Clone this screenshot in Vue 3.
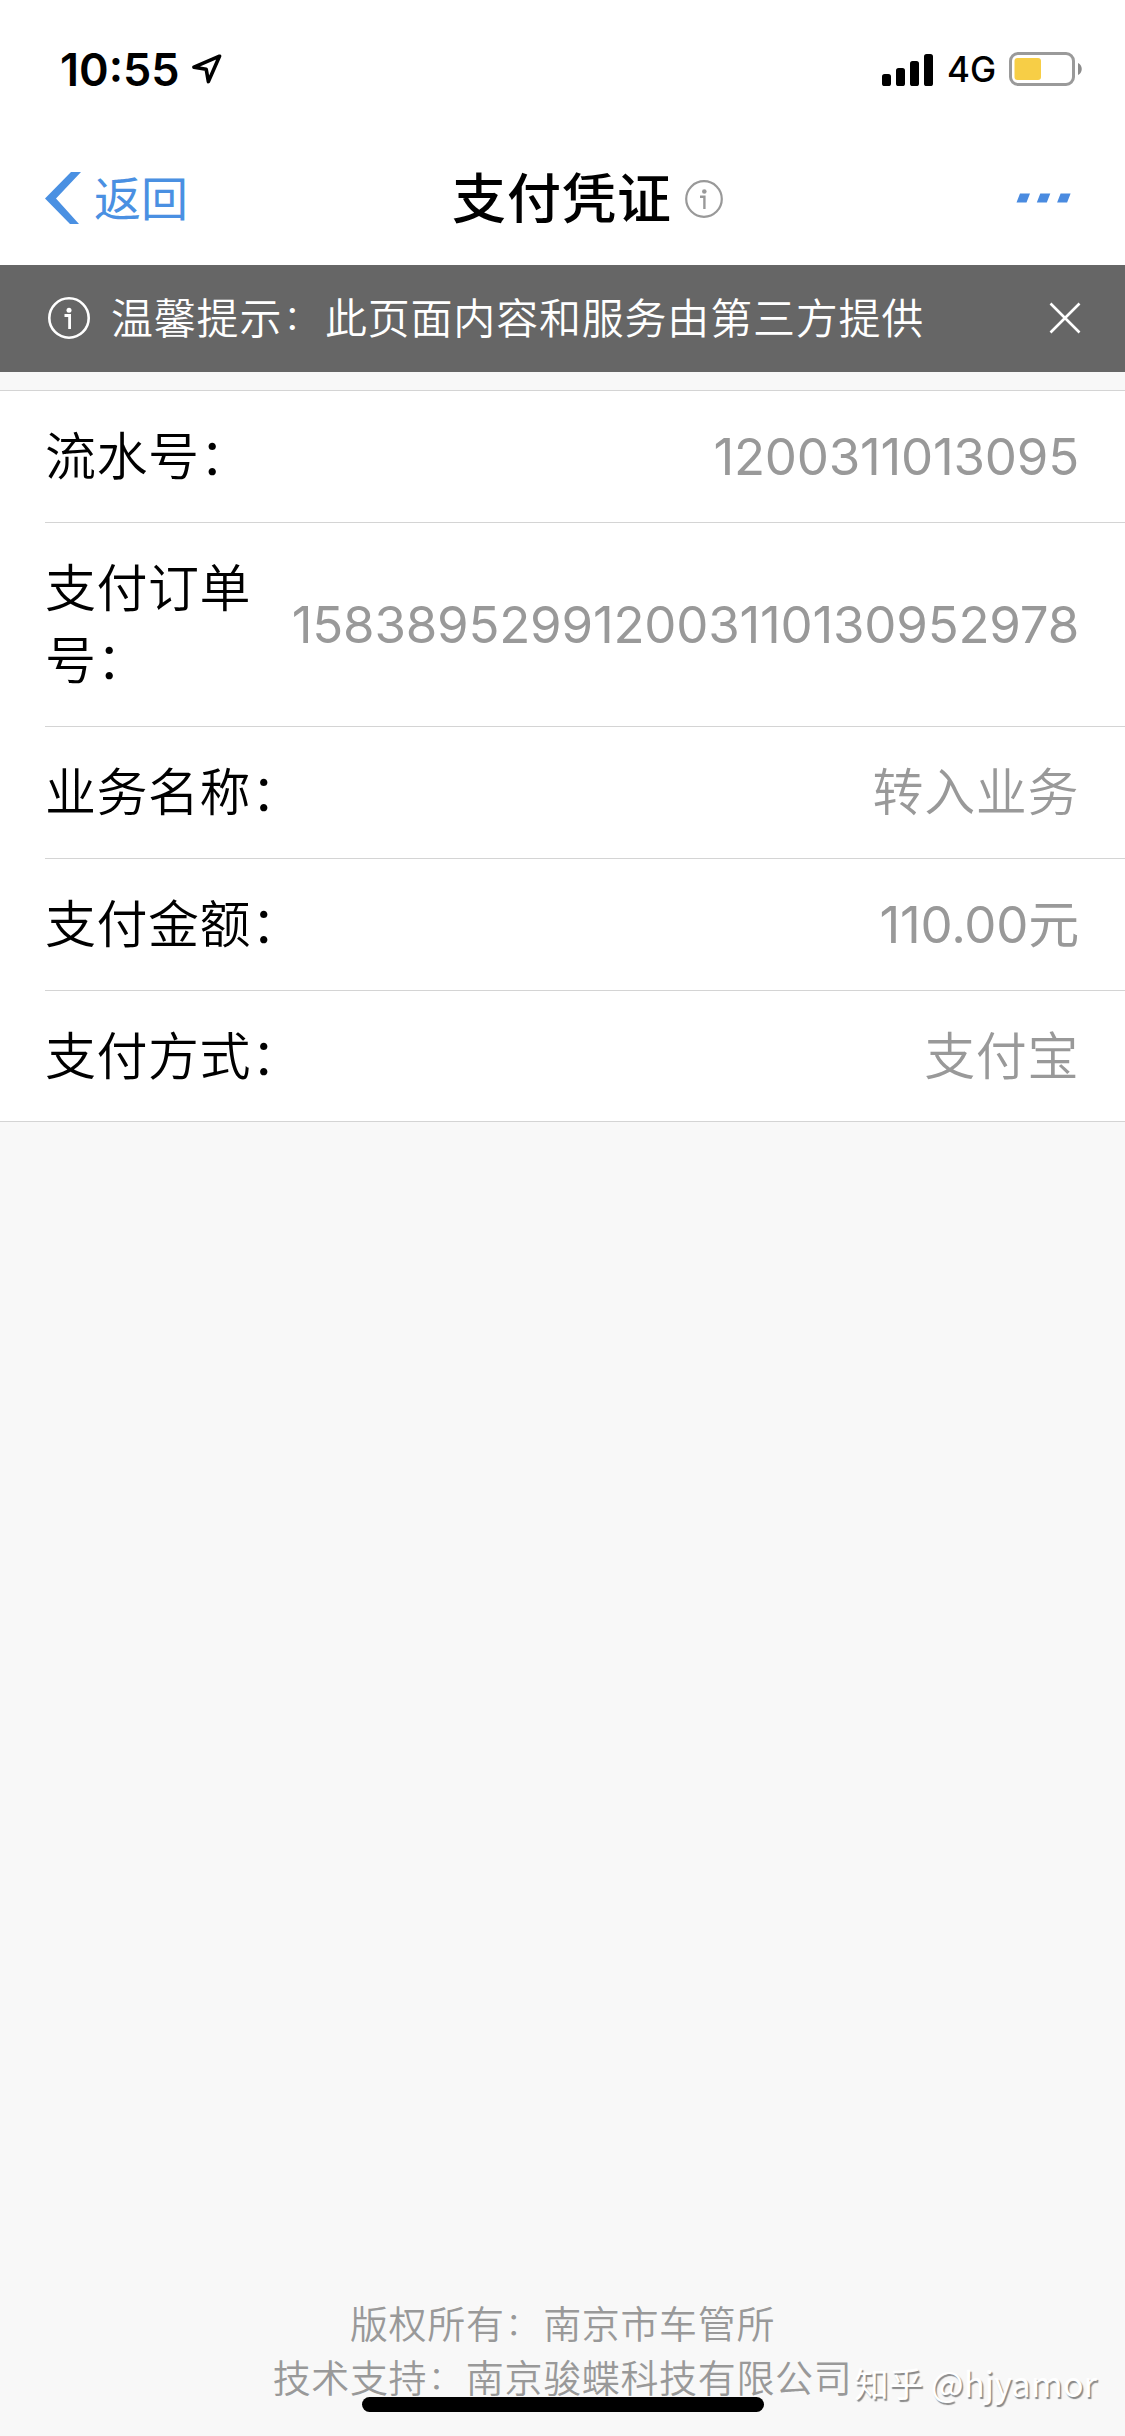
<template>
  <div class="page">
    <!-- 系统状态栏 -->
    <div class="status-bar">
      <div class="status-left">
        <span class="time">10:55</span>
        <svg class="location" width="30" height="30" viewBox="0 0 30 30">
          <path d="M27.5 2.2 L2 13.2 L14.2 15.2 L16.4 27.6 Z" />
        </svg>
      </div>
      <div class="status-right">
        <svg width="52" height="33" viewBox="0 0 52 33">
          <rect v-for="bar in signalBars" :key="bar.x" :x="bar.x" :y="33 - bar.h" width="9" :height="bar.h" rx="2.6" />
        </svg>
        <span class="network">4G</span>
        <svg width="74" height="34" viewBox="0 0 74 34">
          <rect x="1.5" y="1.5" width="63" height="31" rx="7.5" fill="none" stroke="#9a9a9a" stroke-width="3" />
          <rect x="5.5" y="6" width="26.5" height="22" rx="3" fill="#f7ce46" />
          <path d="M69 11 C74 13 74 21 69 23 Z" fill="#8c8c8c" />
        </svg>
      </div>
    </div>

    <!-- 导航栏 -->
    <header class="nav-bar">
      <button class="back">
        <svg width="36" height="52" viewBox="0 0 36 52">
          <path d="M26 0 H36 L11 26.5 L34 52 H25 L0 26.5 Z" fill="#4a90e2" />
        </svg>
        <span class="back-text">返回</span>
      </button>
      <h1 class="title">支付凭证</h1>
      <svg class="title-info" width="38" height="38" viewBox="0 0 38 38">
        <circle cx="19" cy="19" r="17.8" fill="none" stroke="#999" stroke-width="2.2" />
        <circle cx="19.3" cy="11.5" r="2.3" fill="#999" />
        <path d="M15 16.8 H19.4 V29" fill="none" stroke="#999" stroke-width="2.4" />
      </svg>
      <svg class="more" width="56" height="10" viewBox="0 0 56 10">
        <path d="M4 0.5 H14 L10.5 9.5 H0.5 Z M24.3 0.5 H34.3 L30.8 9.5 H20.8 Z M44.6 0.5 H54.6 L51.1 9.5 H41.1 Z" fill="#4a8be0" />
      </svg>
    </header>

    <!-- 第三方提示条 -->
    <div class="notice">
      <svg width="42" height="42" viewBox="0 0 42 42">
        <circle cx="21" cy="21" r="19.7" fill="none" stroke="#fff" stroke-width="2.6" />
        <circle cx="21" cy="13.2" r="2.5" fill="#fff" />
        <path d="M16.5 18.5 H21.6 V32" fill="none" stroke="#fff" stroke-width="2.8" />
      </svg>
      <p class="notice-text">温馨提示<span class="colon">：</span>此页面内容和服务由第三方提供</p>
      <svg class="close" width="32" height="32" viewBox="0 0 32 32">
        <path d="M1.5 1.5 L30.5 30.5 M30.5 1.5 L1.5 30.5" stroke="#fff" stroke-width="2.6" />
      </svg>
    </div>

    <!-- 凭证明细 -->
    <div class="detail-list">
      <div v-for="item in details" :key="item.label" class="detail-row">
        <div class="label">{{ item.label }}</div>
        <div class="value" :class="{ number: item.isNumber }">{{ item.value }}</div>
      </div>
    </div>

    <footer class="footer">
      <p>版权所有<span class="colon">：</span>南京市车管所</p>
      <p>技术支持<span class="colon">：</span>南京骏蝶科技有限公司</p>
    </footer>

    <div class="watermark">知乎 @hjyamor</div>
    <div class="home-indicator"></div>
  </div>
</template>

<script setup>
const signalBars = [
  { x: 0, h: 12 },
  { x: 14, h: 18 },
  { x: 28, h: 25 },
  { x: 42, h: 32 },
];

const details = [
  { label: '流水号：', value: '1200311013095', isNumber: true },
  { label: '支付订单号：', value: '158389529912003110130952978', isNumber: true },
  { label: '业务名称：', value: '转入业务' },
  { label: '支付金额：', value: '110.00元', isNumber: true },
  { label: '支付方式：', value: '支付宝' },
];
</script>

<style>
body {
  margin: 0;
  background: #f8f8f8;
}
</style>

<style scoped>
.page {
  position: relative;
  display: flex;
  flex-direction: column;
  width: 1125px;
  height: 2436px;
  overflow: hidden;
  background: #f8f8f8;
  color: #000;
  font-family: Inter, 'Noto Sans CJK SC', sans-serif;
}

svg {
  display: block;
  flex: none;
}

p {
  margin: 0;
}

.status-bar {
  display: flex;
  justify-content: space-between;
  box-sizing: border-box;
  height: 132px;
  padding: 52px 42px 0 60px;
  background: #fff;
}

.status-left,
.status-right {
  display: flex;
  align-items: center;
  height: 34px;
}

.time {
  width: 132px;
  font-size: 45px;
  font-weight: 600;
  line-height: 35px;
}

.location {
  fill: none;
  stroke: #000;
  stroke-width: 3.6;
  stroke-linejoin: round;
}

.network {
  width: 62px;
  margin-left: 13px;
  font-size: 35px;
  font-weight: 500;
  line-height: 36px;
}

.nav-bar {
  display: flex;
  align-items: center;
  box-sizing: border-box;
  height: 133px;
  padding: 0 53px 2px 45px;
  background: #fff;
}

.back {
  display: flex;
  align-items: center;
  gap: 13px;
  width: 407px;
  padding: 0;
  border: none;
  background: none;
  color: #4a90e2;
  font-family: inherit;
  font-size: 47px;
  line-height: 60px;
}

.back-text {
  margin-top: 2px;
}

.title {
  margin: 4px 0 0;
  font-size: 54px;
  font-weight: 500;
  line-height: 70px;
  letter-spacing: 1px;
}

.title-info {
  margin: 3px 0 0 13px;
}

.more {
  margin-left: auto;
}

.notice {
  display: flex;
  align-items: center;
  box-sizing: border-box;
  height: 107px;
  padding: 0 44px 1px 48px;
  background: #666;
  color: #fff;
}

.notice-text {
  margin: 2px 0 0 21px;
  font-size: 42px;
  font-weight: 350;
  line-height: 60px;
  letter-spacing: 0.8px;
}

/* 全角冒号缩小一点并抬高，和汉字垂直居中 */
.colon {
  margin: 0 0.15em 0 0.04em;
  font-size: 0.84em;
  line-height: 1;
  vertical-align: 0.11em;
}

.close {
  margin-left: auto;
}

.detail-list {
  margin-top: 18px;
  border-top: 1px solid #d4d4d4;
  border-bottom: 1px solid #d4d4d4;
  background: #fff;
}

.detail-row {
  display: flex;
  align-items: center;
  justify-content: space-between;
  margin-left: 45px;
  padding: 29.5px 45px 29.5px 0;
  border-bottom: 1px solid #d4d4d4;
  font-size: 51px;
  line-height: 72px;
}

.detail-row:last-child {
  padding-bottom: 28.5px;
  border-bottom: none;
}

/* 标签占剩余宽度，放不下时自动换行 */
.label {
  flex: 1;
  min-width: 0;
  font-weight: 350;
  letter-spacing: 0.5px;
}

.value {
  flex: none;
  padding-right: 1px;
  color: #999;
  font-weight: 350;
  letter-spacing: 0.6px;
  white-space: nowrap;
}

.value.number {
  font-weight: 400;
  letter-spacing: -0.22px;
}

.footer {
  margin-top: auto;
  padding-bottom: 31px;
  color: #999;
  font-size: 38px;
  font-weight: 350;
  line-height: 54px;
  letter-spacing: 0.65px;
  text-align: center;
}

.watermark {
  position: absolute;
  right: 28px;
  bottom: 30px;
  color: #fff;
  font-family: 'Noto Sans CJK SC', sans-serif;
  font-size: 34.5px;
  line-height: 48px;
  text-shadow: 1.5px 1.5px 1px #888;
}

.home-indicator {
  position: absolute;
  left: 362px;
  bottom: 24px;
  width: 402px;
  height: 15px;
  border-radius: 8px;
  background: #000;
}
</style>
